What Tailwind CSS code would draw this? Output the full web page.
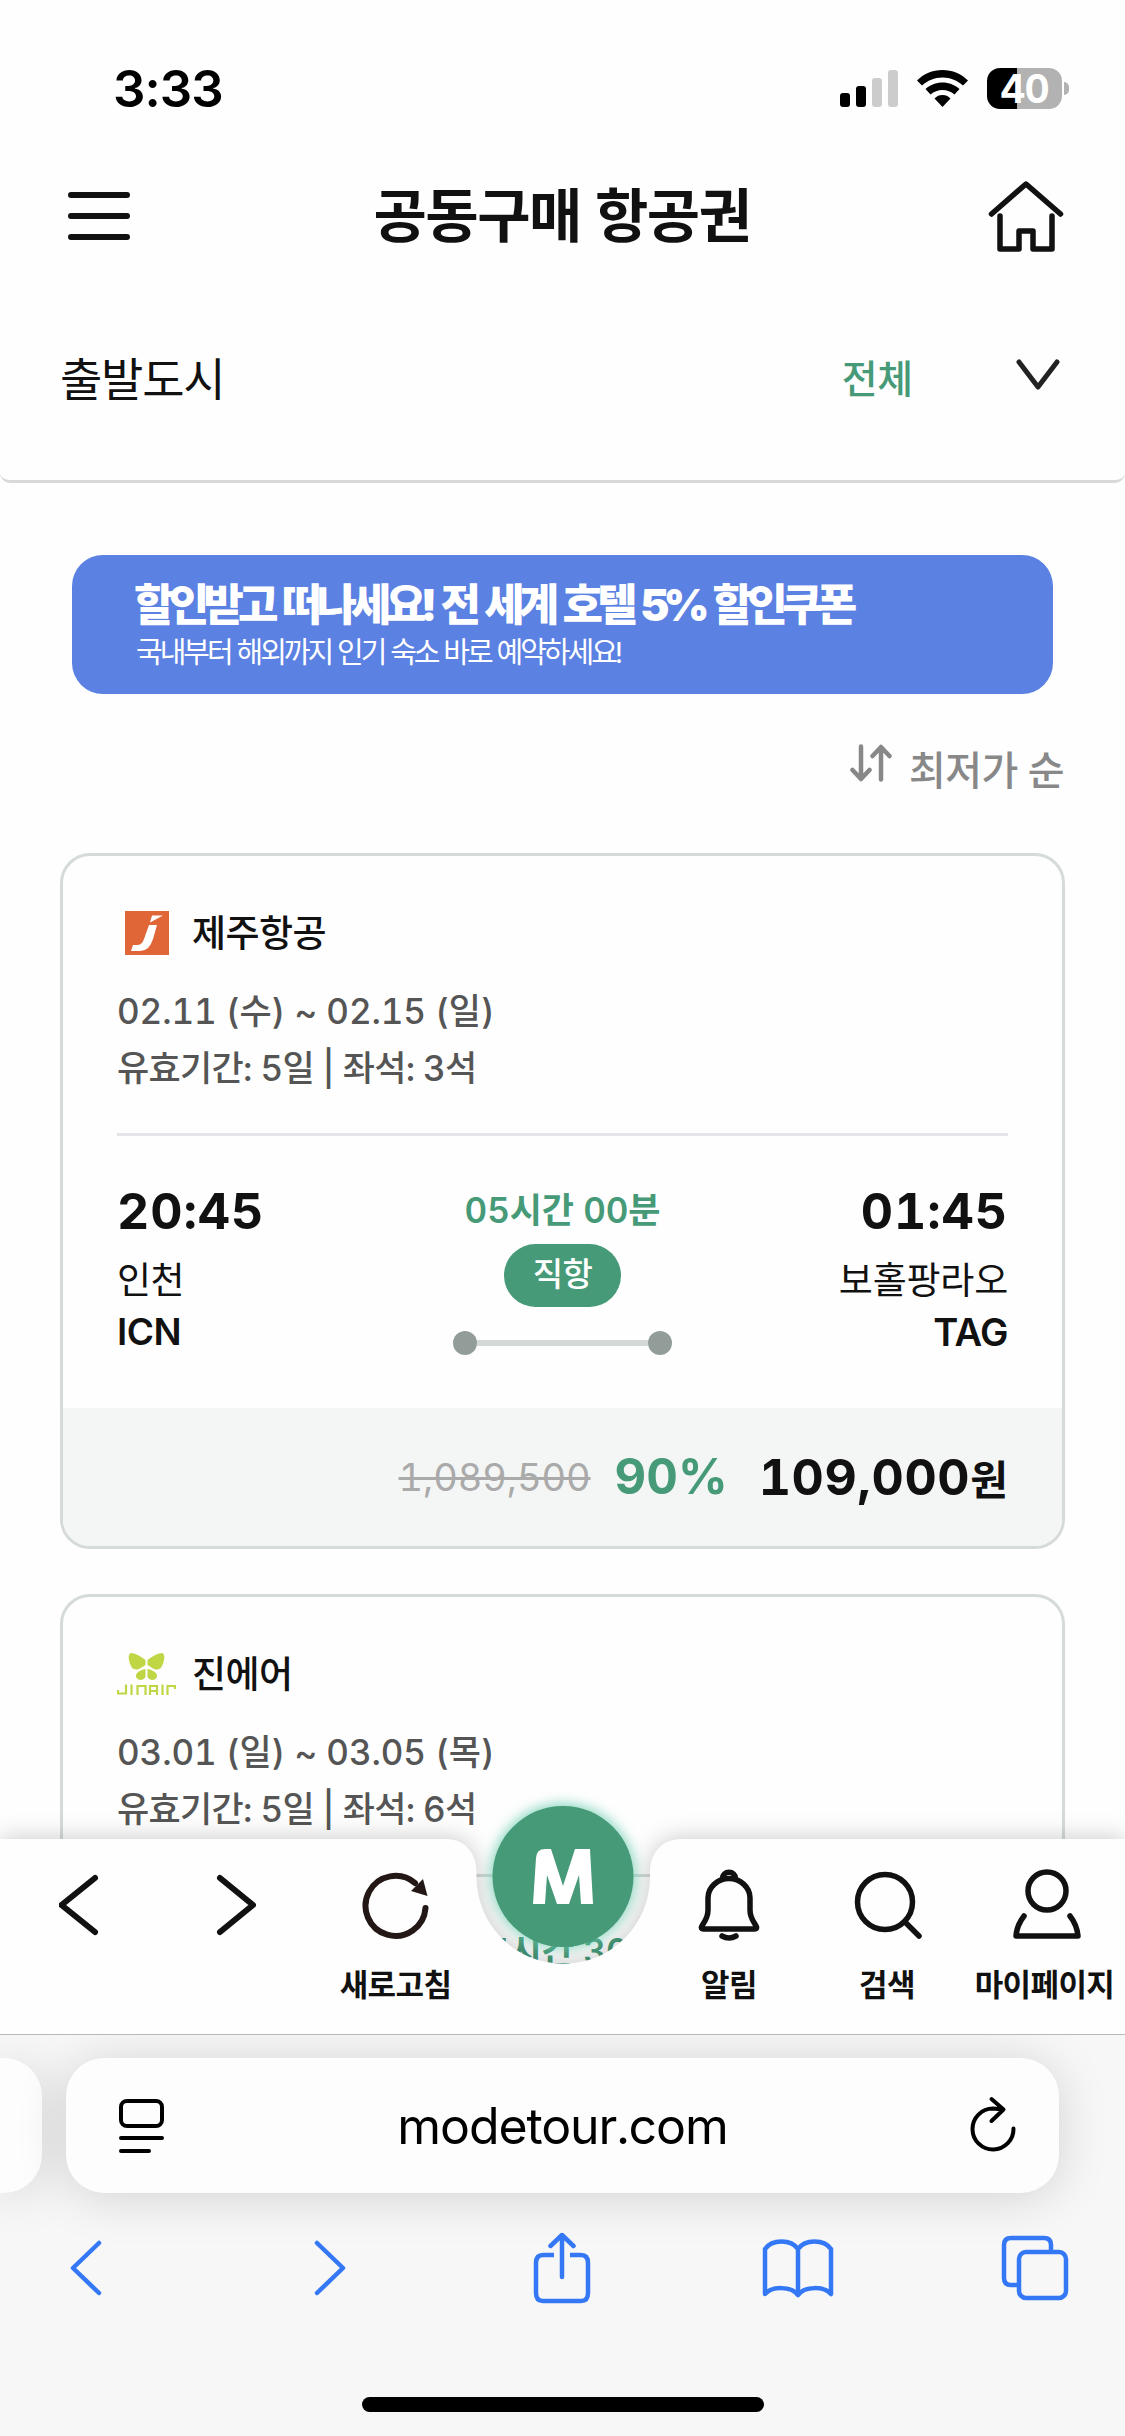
<!DOCTYPE html>
<html lang="ko">
<head>
<meta charset="utf-8">
<title>공동구매 항공권</title>
<script src="https://cdn.jsdelivr.net/npm/@tailwindcss/browser@4"></script>
</head>
<body class="bg-white">
<div class="relative w-[1125px] h-[2436px] overflow-hidden bg-[#fefefe] text-[#111] tabular-nums font-['Inter','Noto_Sans_CJK_KR',sans-serif]">

  <!-- Status bar -->
  <div class="h-[140px] flex items-start justify-between pl-[113px] pr-[56px] pt-[66px] text-black">
    <div class="text-[51px] leading-[45px] font-semibold tracking-[-1px] proportional-nums">3:33</div>
    <div class="flex items-center gap-[19px] h-[45px]">
      <svg class="w-[58px] h-[37px]" viewBox="0 0 58 37"><rect x="0" y="23" width="10" height="14" rx="3"/><rect x="16" y="16" width="10" height="21" rx="3"/><rect x="32" y="8" width="10" height="29" rx="3" fill="#ccc"/><rect x="48" y="0" width="10" height="37" rx="3" fill="#ccc"/></svg>
      <svg class="w-[51px] h-[37px]" viewBox="0 0 51 37"><path d="M25.500 0C35.500 0 44.500 4 51 10.500L46 15.500C40.500 10.500 33.500 7.500 25.500 7.500S10.500 10.500 5 15.500L0 10.500C6.500 4 15.500 0 25.500 0Z"/><path d="M25.500 12.500C32 12.500 38 15 42.500 19L37.500 24.500C34 21.500 30 20 25.500 20S17 21.500 13.500 24.500L8.500 19C13 15 19 12.500 25.500 12.500Z"/><path d="M25.500 25C29 25 31 26 33.500 28.500L25.500 37L17.500 28.500C20 26 22 25 25.500 25Z"/></svg>
      <div class="flex items-center gap-[2px]">
        <div class="w-[75px] h-[41px] rounded-[13px] bg-linear-to-r from-black from-40% to-[#b2b2b2] to-40% text-white text-[39px] font-bold tracking-[-1px] leading-[41px] text-center">40</div>
        <div class="w-[5px] h-[13px] rounded-r-full bg-[#b2b2b2]"></div>
      </div>
    </div>
  </div>

  <!-- Header -->
  <header class="h-[152px] flex items-center justify-between pl-[68px] pr-[61px]">
    <svg class="w-[76px] h-[48px]" viewBox="0 0 76 48" stroke="#111" stroke-width="6" stroke-linecap="round"><path d="M3 3H59M3 24H59M3 45H59"/></svg>
    <h1 class="mr-[8px] text-[58px] font-bold tracking-[-1.500px] leading-none">공동구매 항공권</h1>
    <svg class="w-[76px] h-[73px]" viewBox="0 0 76 73" fill="none" stroke="#111" stroke-width="5.500" stroke-linecap="round" stroke-linejoin="round"><path d="M3.500 34L38 4L72.500 34M12 36V69H31V51H45V69H64V36"/></svg>
  </header>

  <!-- Departure filter -->
  <div class="h-[191px] flex items-start justify-between border-b-[3px] border-[#d9d9d9] rounded-b-[10px] pl-[60px] pr-[65px] pt-[64px]">
    <span class="text-[46px] leading-[46px] tracking-[-1.200px]">출발도시</span>
    <div class="flex items-center gap-[103px] h-[46px]">
      <span class="text-[39px] leading-[44px] font-medium tracking-[-.200px] text-[#469a78]">전체</span>
      <svg class="w-[44px] h-[32px] mb-[8px]" viewBox="0 0 44 32" fill="none" stroke="#222" stroke-width="5" stroke-linecap="round" stroke-linejoin="round"><path d="M3 3L22 28L41 3"/></svg>
    </div>
  </div>

  <!-- Promo banner -->
  <div class="mt-[72px] mx-[72px] h-[139px] rounded-[31px] bg-[#5b81e2] text-white pl-[62px] pt-[27px]">
    <div class="text-[44px] leading-[46px] font-black tracking-[-5.800px] [word-spacing:3px] whitespace-nowrap">할인받고 떠나세요! 전 세계 호텔 5% 할인쿠폰</div>
    <div class="pl-[2px] text-[29px] leading-[50px] tracking-[-3px] [word-spacing:1px] whitespace-nowrap">국내부터 해외까지 인기 숙소 바로 예약하세요!</div>
  </div>

  <!-- Sort -->
  <div class="mt-[44px] h-[64px] flex items-center justify-end gap-[17px] pr-[61px] text-[#888]">
    <svg class="w-[42px] h-[38px] mb-[14px]" viewBox="0 0 42 38" fill="none" stroke="#888" stroke-width="4.500" stroke-linecap="round" stroke-linejoin="round"><path d="M11 2.500V35M2.500 26L11 35L19.500 26M31 35.500V3M22.500 12L31 3L39.500 12"/></svg>
    <span class="pt-[2px] text-[40px] leading-none font-medium tracking-[-.600px]">최저가 순</span>
  </div>

  <!-- Fare cards -->
  <main class="mt-[51px] px-[60px] flex flex-col gap-[45px]">
    <article class="h-[696px] shrink-0 border-[3px] border-[#d5dbd9] rounded-[30px] overflow-hidden">
      <div class="mx-[54px] h-[280px] border-b-[3px] border-[#e4e4e9] pt-[52px]">
        <div class="flex items-center gap-[16px] h-[50px]">
          <div class="w-[59px] flex justify-center">
            <svg class="w-[44px] h-[44px]" viewBox="0 0 44 44"><rect width="44" height="44" fill="#e06638"/><path d="M27 4.500H38L25 11.500ZM24 14H32L28 28Q24.500 40 15 40H6L8 34H12Q17 34 19 28Z" fill="#fff"/></svg>
          </div>
          <span class="text-[37px] font-medium tracking-[-.500px] leading-none">제주항공</span>
        </div>
        <div class="mt-[25px] text-[35px] leading-[57px] font-medium text-[#555] whitespace-nowrap">
          <div class="tracking-[-.100px]">02.11 (수) ~ 02.15 (일)</div>
          <div class="tracking-[-.700px]">유효기간: 5일 | 좌석: 3석</div>
        </div>
      </div>
      <div class="h-[272px] px-[54px] grid grid-cols-[1fr_auto_1fr]">
        <div class="pt-[45px]"><div class="text-[50px] leading-[60px] font-bold tracking-[.900px]">20:45</div><div class="mt-[14px] text-[37px] leading-[52px] tracking-[-.500px]">인천</div><div class="text-[37px] leading-[50px] font-semibold tracking-[-.500px]">ICN</div></div>
        <div class="pt-[49px] flex flex-col items-center text-[#469a78]">
          <div class="text-[35px] leading-[50px] font-semibold tracking-[-.100px] whitespace-nowrap">05시간 00분</div>
          <div class="mt-[9px] w-[117px] h-[63px] rounded-full bg-[#469a78] text-white text-[33px] leading-[61px] font-medium tracking-[-.500px] text-center">직항</div>
          <div class="mt-[24px] w-[219px] flex items-center"><i class="size-[24px] rounded-full bg-[#929d9a]"></i><i class="h-[6px] grow bg-[#d3d9d7]"></i><i class="size-[24px] rounded-full bg-[#929d9a]"></i></div>
        </div>
        <div class="pt-[45px] text-right"><div class="text-[50px] leading-[60px] font-bold tracking-[.900px]">01:45</div><div class="mt-[14px] text-[37px] leading-[52px] tracking-[-.200px]">보홀팡라오</div><div class="text-[38px] leading-[50px] font-semibold tracking-[-.500px]">TAG</div></div>
      </div>
      <div class="h-[138px] bg-[#f4f6f5] px-[54px] flex items-center justify-end whitespace-nowrap">
        <span class="text-[38px] text-[#aaa] line-through tracking-[-.100px]">1,089,500</span>
        <span class="ml-[24px] text-[49px] font-bold text-[#469a78]">90%</span>
        <span class="ml-[31px] text-[50px] font-bold tracking-[.600px]">109,000<span class="text-[41px] tracking-normal">원</span></span>
      </div>
    </article>

    <article class="h-[696px] shrink-0 border-[3px] border-[#d5dbd9] rounded-[30px] overflow-hidden">
      <div class="mx-[54px] h-[280px] border-b-[3px] border-[#d5dbd9] pt-[52px]">
        <div class="flex items-center gap-[16px] h-[50px]">
          <svg class="w-[59px] h-[42px]" viewBox="0 0 59 42" fill="#c0d645"><path d="M28.500 7C23 3 18 0 14 0C10 1 12 9 14 13C16 17 19 17 22 16L28.500 12Z"/><path d="M30.500 7C36 3 41 0 45 0C49 1 47 9 45 13C43 17 40 17 37 16L30.500 12Z"/><path d="M28.500 16C23 17 18 20 19 24C21 28 26 28 28.500 24ZM30.500 16C36 17 41 20 40 24C38 28 33 28 30.500 24Z"/><path d="M1 37V40.500H9V31.500M14.500 31.500V42M20.500 42V33H28.500V42M33 42V33H40V42M33 38H40M45.500 31.500V42M50.500 42V33H58V36" fill="none" stroke="#c0d645" stroke-width="2.200"/></svg>
          <span class="text-[37px] font-medium tracking-[-.500px] leading-none">진에어</span>
        </div>
        <div class="mt-[25px] text-[35px] leading-[57px] font-medium text-[#555] whitespace-nowrap">
          <div class="tracking-[-.100px]">03.01 (일) ~ 03.05 (목)</div>
          <div class="tracking-[-.700px]">유효기간: 5일 | 좌석: 6석</div>
        </div>
      </div>
      <div class="pt-[49px] text-center text-[35px] leading-[50px] font-semibold text-[#469a78]">05시간 30분</div>
    </article>
  </main>

  <!-- App navigation, overlaid on the scrolling list -->
  <nav class="absolute left-0 top-[1789px] w-[1125px] h-[246px]">
    <svg class="absolute inset-0 w-[1125px] h-[246px]" viewBox="0 0 1125 246">
      <defs>
        <filter id="soft" x="-10%" y="-40%" width="120%" height="180%"><feGaussianBlur stdDeviation="12"/></filter>
        <filter id="glow" x="-30%" y="-30%" width="160%" height="160%"><feGaussianBlur stdDeviation="6"/></filter>
      </defs>
      <path d="M0 50H446C465 50 476.500 64 476.500 83V88A86.750 86.750 0 0 0 650 88V83C650 64 662 50 681 50H1125V300H0Z" fill="#000" fill-opacity=".22" filter="url(#soft)"/>
      <path d="M0 50H446C465 50 476.500 64 476.500 83V88A86.750 86.750 0 0 0 650 88V83C650 64 662 50 681 50H1125V246H0Z" fill="#fefefe"/>
      <clipPath id="notch"><path d="M476.500 0H650V88A86.750 86.750 0 0 1 476.500 88Z"/></clipPath>
      <g clip-path="url(#notch)"><circle cx="563" cy="87" r="73" fill="#62c9ab" fill-opacity=".7" filter="url(#glow)"/></g>
      <circle cx="563" cy="87.500" r="70.500" fill="#469a78"/>
      <path d="M536 69Q536.500 60 545 60H551L563 97L575 60H590L593 115H581L579 86L569 115H557L547 86L545 115H533Z" fill="#fff"/>
    </svg>
    <div class="relative flex pt-[80px] text-[31px] leading-[40px] font-semibold tracking-[-.600px] whitespace-nowrap">
      <div class="w-[157px] flex flex-col items-center"><svg class="w-[40px] h-[74px]" viewBox="0 0 40 74" fill="none" stroke="#111" stroke-width="6" stroke-linecap="round" stroke-linejoin="round"><path d="M36 9L2.500 36L36 63"/></svg></div>
      <div class="w-[158px] flex flex-col items-center"><svg class="w-[40px] h-[74px]" viewBox="0 0 40 74" fill="none" stroke="#111" stroke-width="6" stroke-linecap="round" stroke-linejoin="round"><path d="M4 9L37 36L4 63"/></svg></div>
      <div class="w-[161px] flex flex-col items-center"><svg class="w-[70px] h-[74px]" viewBox="0 0 70 74" fill="none" stroke="#231815" stroke-width="6" stroke-linecap="round"><path d="M64.500 39A30 30 0 1 1 54 14"/><path d="M62 10L66.500 27L50 22Z" fill="#231815" stroke="none"/></svg><span class="mt-[22px]">새로고침</span></div>
      <div class="w-[174px]"></div>
      <div class="w-[158px] flex flex-col items-center"><svg class="w-[62px] h-[74px]" viewBox="0 0 62 74" fill="none" stroke="#111" stroke-width="5.500" stroke-linecap="round" stroke-linejoin="round"><path d="M24.500 10C24 1 38 1 37.500 10M31 9.500C42 9.500 52 18 52 29V41C52 50 57 54 58.500 58Q59 60 56 60H6Q3 60 3.500 58C5 54 10 50 10 41V29C10 18 20 9.500 31 9.500ZM24 67Q31 71 38 67"/></svg><span class="mt-[22px]">알림</span></div>
      <div class="w-[158px] flex flex-col items-center"><svg class="ml-[1px] w-[68px] h-[74px]" viewBox="0 0 68 74" fill="none" stroke="#111" stroke-width="5.500" stroke-linecap="round"><circle cx="31" cy="33" r="27.500"/><path d="M51 53L65 67"/></svg><span class="mt-[22px]">검색</span></div>
      <div class="w-[157px] flex flex-col items-center"><svg class="ml-[5px] w-[68px] h-[74px]" viewBox="0 0 68 74" fill="none" stroke="#111" stroke-width="5.500" stroke-linecap="round" stroke-linejoin="round"><circle cx="34" cy="22" r="19"/><path d="M11 47Q4 56 3 67H65Q64 56 57 47"/></svg><span class="mt-[22px]">마이페이지</span></div>
    </div>
  </nav>

  <!-- Browser chrome -->
  <footer class="absolute left-0 top-[2034px] w-[1125px] h-[402px] border-t border-[#b8b8b8] bg-[#f7f7f7] overflow-hidden text-black">
    <div class="pt-[23px] flex gap-[24px]">
      <div class="w-[42px] h-[135px] rounded-r-[38px] bg-[#fdfdfd] shadow-[0_4px_50px_rgba(0,0,0,0.15)]"></div>
      <div class="w-[993px] h-[135px] rounded-[38px] bg-[#fdfdfd] shadow-[0_4px_50px_rgba(0,0,0,0.15)] flex items-center justify-between pl-[53px] pr-[43px]">
        <svg class="w-[46px] h-[56px]" viewBox="0 0 46 56" fill="none" stroke="#000" stroke-width="4" stroke-linecap="round"><rect x="2" y="3" width="41" height="25" rx="6"/><path d="M2 40H43M2 53H30"/></svg>
        <span class="mr-[10px] text-[50px] tracking-[-1.100px] leading-none">modetour.com</span>
        <svg class="w-[46px] h-[56px] overflow-visible" viewBox="0 0 46 56" fill="none" stroke="#000" stroke-width="4" stroke-linecap="round" stroke-linejoin="round"><path d="M43.500 30.500A20.500 20.500 0 1 1 23 10.500L33.500 11.500M21.500 1L33.500 11.500L21.500 23"/></svg>
      </div>
    </div>
    <div class="mt-[37px] h-[76px] pl-[70px] flex items-center">
      <svg class="w-[32px] h-[56px]" viewBox="0 0 32 56" fill="none" stroke="#3478f6" stroke-width="4.500" stroke-linecap="round" stroke-linejoin="round"><path d="M29 3L3 28L29 53"/></svg>
      <svg class="ml-[212px] w-[32px] h-[56px]" viewBox="0 0 32 56" fill="none" stroke="#3478f6" stroke-width="4.500" stroke-linecap="round" stroke-linejoin="round"><path d="M3 3L29 28L3 53"/></svg>
      <svg class="ml-[187px] w-[58px] h-[72px]" viewBox="0 0 58 72" fill="none" stroke="#3478f6" stroke-width="4.500" stroke-linejoin="round"><path d="M21 23H10Q3 23 3 31V61Q3 69 10 69H48Q55 69 55 61V31Q55 23 48 23H37"/><path stroke-linecap="round" d="M29 45V3M17.500 14L29 3L40.500 14"/></svg>
      <svg class="ml-[171px] w-[72px] h-[60px]" viewBox="0 0 72 60" fill="none" stroke="#3478f6" stroke-width="4.500" stroke-linecap="round" stroke-linejoin="round"><path d="M36 11C29 1 10 1 3 11V56C10 48 29 48 36 57C43 48 62 48 69 56V11C62 1 43 1 36 11ZM36 11V57"/></svg>
      <svg class="ml-[167px] w-[68px] h-[66px]" viewBox="0 0 68 66" fill="none" stroke="#3478f6" stroke-width="4.500"><path d="M16 50H10Q3 50 3 43V10Q3 3 10 3H43Q50 3 50 10V16"/><rect x="18" y="17" width="47" height="46" rx="7"/></svg>
    </div>
    <div class="mt-[91px] mx-auto w-[402px] h-[15px] rounded-full bg-black"></div>
  </footer>
</div>
</body>
</html>
